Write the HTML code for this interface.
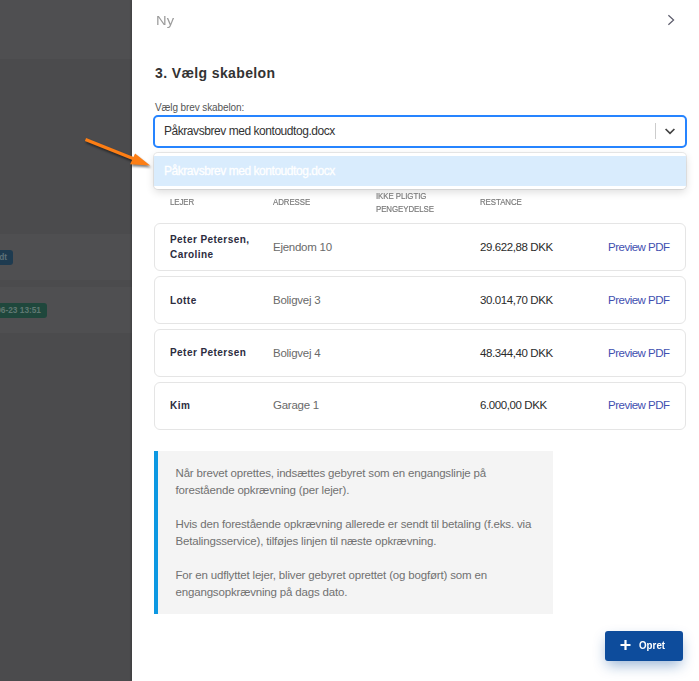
<!DOCTYPE html>
<html lang="da">
<head>
<meta charset="utf-8">
<title>Vælg skabelon</title>
<style>
*{box-sizing:border-box;margin:0;padding:0}
html,body{width:699px;height:681px;overflow:hidden;background:#4b4b4d}
body{position:relative;font-family:"Liberation Sans",sans-serif;-webkit-font-smoothing:antialiased}
.abs{position:absolute;white-space:nowrap;line-height:1}
/* dimmed background page */
.bg-top{position:absolute;left:0;top:0;width:132px;height:59px;background:#4f4f51}
.bg-row{position:absolute;left:0;width:132px;background:#4f4f51}
.badge{position:absolute;left:-60px;height:15px;border-radius:3px;color:#5f7178;font-weight:bold;font-size:8.3px;line-height:15px;text-align:right;padding-right:6px;white-space:nowrap;overflow:hidden}
/* drawer */
.panel{position:absolute;left:132px;top:0;width:567px;height:681px;background:#fff;box-shadow:-1px 0 2px rgba(0,0,0,.2)}
.select{position:absolute;left:153px;top:115px;width:534px;height:33px;border:2px solid #2684ff;border-radius:5px;background:#fff}
.sep{position:absolute;left:655px;top:123px;width:1px;height:16px;background:#ccc}
.menu{position:absolute;left:154px;top:153px;width:532px;height:36px;border-radius:4px;background:#fff;box-shadow:0 0 0 1px rgba(0,0,0,.08),0 3px 9px rgba(0,0,0,.14)}
.opt{position:absolute;left:154px;top:156px;width:532px;height:30px;background:#d9ecfd}
.row{position:absolute;left:154px;width:532px;height:48px;border:1px solid #e5e5e5;border-radius:6px;background:#fff}
.th{color:#7b7b7b;-webkit-text-stroke:.2px #7b7b7b;font-size:9.8px;letter-spacing:-.1px;transform:scaleX(.805);transform-origin:0 0}
.name{color:#2c2c40;font-weight:bold;font-size:10px;letter-spacing:.44px}
.addr{color:#6a6a6a;font-size:11.5px;letter-spacing:-.26px}
.amt{color:#2b2b2b;font-size:11.5px;letter-spacing:-.4px}
.link{color:#3f4fb0;font-size:11.5px;letter-spacing:-.5px}
.info{position:absolute;left:154px;top:451px;width:399px;height:163px;background:#f4f4f4;border-left:4px solid #0d98e2}
.info p{position:absolute;left:17.5px;color:#717171;font-size:11.5px;line-height:17px;white-space:nowrap;letter-spacing:-.17px}
.btn{position:absolute;left:605px;top:631px;width:78px;height:30px;border-radius:3px;background:#0d4c9c;box-shadow:0 6px 14px -2px rgba(13,76,156,.42)}
</style>
</head>
<body>
<div class="bg-top"></div>
<div class="bg-row" style="top:234px;height:46px"></div>
<div class="bg-row" style="top:287px;height:46px"></div>
<div class="badge" style="top:250px;width:73px;background:#1e3b50">Sendt</div>
<div class="badge" style="top:303px;width:107px;background:#1f473c;color:#5f7872">16-06-23 13:51</div>

<div class="panel"></div>

<div class="abs" id="ny" style="left:156px;top:14.4px;font-size:13.5px;transform:scaleX(1.09);transform-origin:0 0;color:#9b9b9b">Ny</div>
<svg class="abs" style="left:664px;top:12px" width="14" height="16" viewBox="0 0 14 16"><path d="M4.4 3.2 L9.6 8 L4.4 12.8" fill="none" stroke="#5b5b6b" stroke-width="1.2"/></svg>

<div class="abs" id="title" style="left:155px;top:66.2px;font-size:14px;letter-spacing:.38px;font-weight:bold;color:#333">3. Vælg skabelon</div>
<div class="abs" id="label" style="left:155px;top:102.8px;font-size:10px;letter-spacing:-.11px;color:#555">Vælg brev skabelon:</div>

<div class="select"></div>
<div class="abs" id="seltext" style="left:164px;top:125px;font-size:12px;letter-spacing:-.45px;color:#333">Påkravsbrev med kontoudtog.docx</div>
<div class="sep"></div>
<svg class="abs" style="left:663px;top:125px" width="14" height="12" viewBox="0 0 14 12"><path d="M2.6 4 L7 8.4 L11.4 4" fill="none" stroke="#444" stroke-width="1.7"/></svg>

<div class="menu"></div>
<div class="opt"></div>
<div class="abs" id="opttext" style="left:164px;top:164.5px;font-size:12px;letter-spacing:-.45px;color:#fff;-webkit-text-stroke:.3px #fff">Påkravsbrev med kontoudtog.docx</div>

<div class="abs th" id="th1" style="left:170px;top:196.5px">LEJER</div>
<div class="abs th" id="th2" style="left:273px;top:196.5px">ADRESSE</div>
<div class="abs th" id="th3" style="left:376px;top:190.7px">IKKE PLIGTIG</div>
<div class="abs th" id="th3b" style="left:376px;top:203.5px">PENGEYDELSE</div>
<div class="abs th" id="th4" style="left:480px;top:196.5px">RESTANCE</div>

<div class="row" style="top:223px"></div>
<div class="row" style="top:276px"></div>
<div class="row" style="top:329px"></div>
<div class="row" style="top:382px"></div>

<div class="abs name" id="n1a" style="left:170px;top:234.5px">Peter Petersen,</div>
<div class="abs name" id="n1b" style="left:170px;top:249.7px">Caroline</div>
<div class="abs addr" id="a1" style="left:273px;top:241.7px">Ejendom 10</div>
<div class="abs amt" id="m1" style="left:480px;top:241.6px">29.622,88 DKK</div>
<div class="abs link" id="l1" style="left:608px;top:241.6px">Preview PDF</div>

<div class="abs name" id="n2" style="left:170px;top:295.5px">Lotte</div>
<div class="abs addr" id="a2" style="left:273px;top:294.8px">Boligvej 3</div>
<div class="abs amt" id="m2" style="left:480px;top:294.8px">30.014,70 DKK</div>
<div class="abs link" id="l2" style="left:608px;top:294.8px">Preview PDF</div>

<div class="abs name" id="n3" style="left:170px;top:347.6px">Peter Petersen</div>
<div class="abs addr" id="a3" style="left:273px;top:347.6px">Boligvej 4</div>
<div class="abs amt" id="m3" style="left:480px;top:347.5px">48.344,40 DKK</div>
<div class="abs link" id="l3" style="left:608px;top:347.5px">Preview PDF</div>

<div class="abs name" id="n4" style="left:170px;top:400.6px">Kim</div>
<div class="abs addr" id="a4" style="left:273px;top:399.6px">Garage 1</div>
<div class="abs amt" id="m4" style="left:480px;top:399.6px">6.000,00 DKK</div>
<div class="abs link" id="l4" style="left:608px;top:399.6px">Preview PDF</div>

<div class="info">
<p id="p1" style="top:13.5px">Når brevet oprettes, indsættes gebyret som en engangslinje på<br>forestående opkrævning (per lejer).<br><br>Hvis den forestående opkrævning allerede er sendt til betaling (f.eks. via<br>Betalingsservice), tilføjes linjen til næste opkrævning.<br><br>For en udflyttet lejer, bliver gebyret oprettet (og bogført) som en<br>engangsopkrævning på dags dato.</p>
</div>

<div class="btn"></div>
<svg class="abs" style="left:619px;top:639px" width="13" height="12" viewBox="0 0 13 12"><path d="M6.5 1 V11 M1.5 6 H11.5" fill="none" stroke="#fff" stroke-width="2.2"/></svg>
<div class="abs" id="btntext" style="left:638.5px;top:639.5px;font-size:11.5px;font-weight:bold;color:#fff;transform:scaleX(.85);transform-origin:0 50%">Opret</div>

<svg class="abs" style="left:70px;top:125px;filter:drop-shadow(1.5px 2px 1.2px rgba(0,0,0,.5))" width="100" height="60" viewBox="70 125 100 60">
<line x1="85.5" y1="139.5" x2="138" y2="160.5" stroke="#fd7e14" stroke-width="3.2"/>
<polygon points="135.1,153.6 150.1,165.5 130.1,164.3" fill="#fd7e14"/>
</svg>
</body>
</html>
